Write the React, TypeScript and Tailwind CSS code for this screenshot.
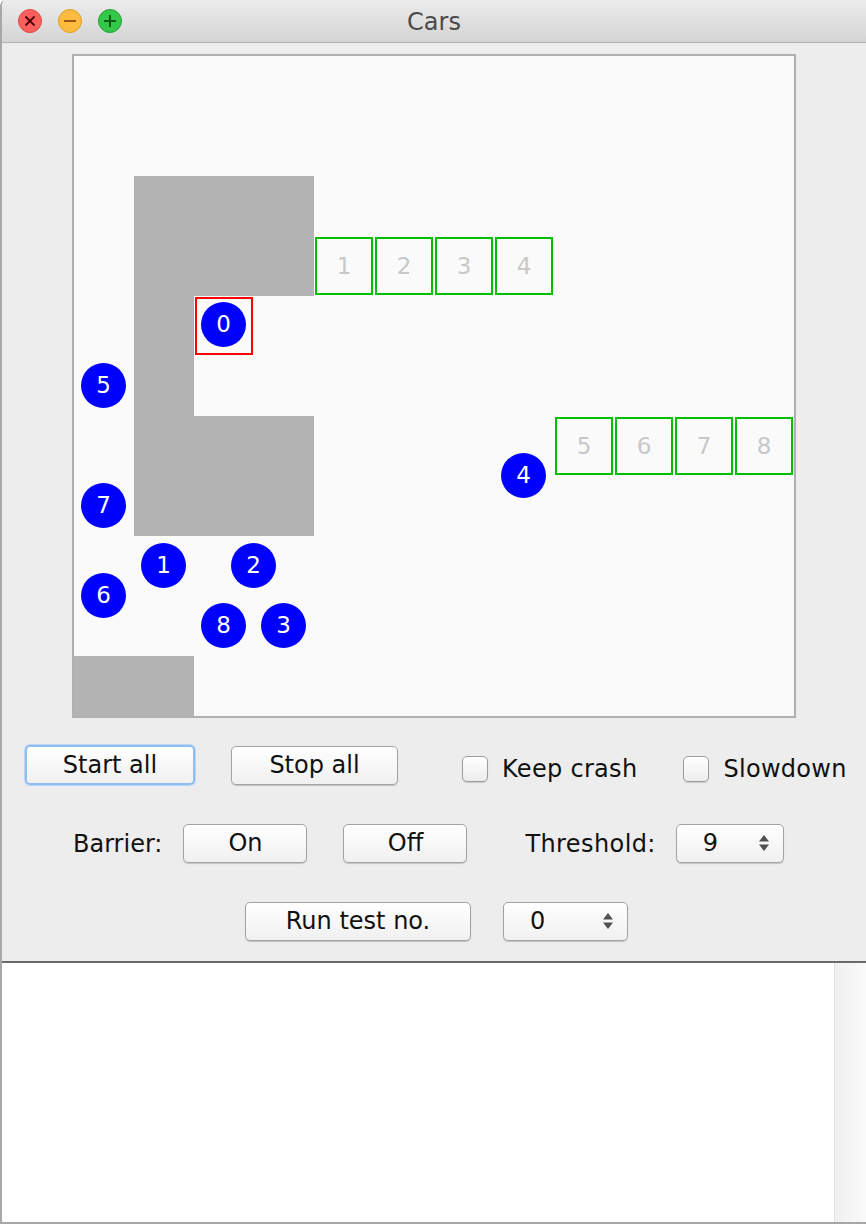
import React from "react";

const FONT = { fontFamily: '"DejaVu Sans", "Liberation Sans", sans-serif' };

const cars = [
  { n: 0, x: 149.5, y: 268.5 },
  { n: 5, x: 29.5, y: 329 },
  { n: 7, x: 29.5, y: 449 },
  { n: 1, x: 89.5, y: 509 },
  { n: 2, x: 179.5, y: 509 },
  { n: 6, x: 29.5, y: 539 },
  { n: 8, x: 149.5, y: 569 },
  { n: 3, x: 209.5, y: 569 },
  { n: 4, x: 449.5, y: 419 },
];

const slots = [
  { n: 1, c: 4, r: 3 },
  { n: 2, c: 5, r: 3 },
  { n: 3, c: 6, r: 3 },
  { n: 4, c: 7, r: 3 },
  { n: 5, c: 8, r: 6 },
  { n: 6, c: 9, r: 6 },
  { n: 7, c: 10, r: 6 },
  { n: 8, c: 11, r: 6 },
];

const blocks = [
  { x: 60, y: 120, w: 180, h: 120 },
  { x: 60, y: 240, w: 60, h: 120 },
  { x: 60, y: 360, w: 180, h: 120 },
  { x: 0, y: 600, w: 120, h: 60 },
];

function Btn({ label, w, focus }: { label: string; w: string; focus?: boolean }) {
  return (
    <div
      className={
        "h-[39px] flex items-center justify-center rounded-[5px] text-[24px] text-[#111] bg-gradient-to-b from-white to-[#f0f0f0] " +
        w +
        (focus
          ? " border-2 border-[#8fbef3] shadow-[0_0_0_1px_#b9d6f7]"
          : " border border-[#a3a3a3] shadow-[0_1px_1px_rgba(0,0,0,0.18)]")
      }
    >
      {label}
    </div>
  );
}

function Spinner({ value, w }: { value: string; w: string }) {
  return (
    <div
      className={
        "h-[39px] flex items-center rounded-[5px] border border-[#a3a3a3] bg-gradient-to-b from-white to-[#f0f0f0] shadow-[0_1px_1px_rgba(0,0,0,0.18)] text-[24px] text-[#111] " +
        w
      }
    >
      <span className="ml-[26px] flex-1">{value}</span>
      <svg width="12" height="18" viewBox="0 0 12 18" className="mr-[13px]">
        <polygon points="6,1 11,7.5 1,7.5" fill="#505050" />
        <polygon points="6,17 11,10.5 1,10.5" fill="#505050" />
      </svg>
    </div>
  );
}

function Check({ label }: { label: string }) {
  return (
    <div className="flex items-center">
      <div className="w-[26px] h-[26px] rounded-[5px] border border-[#9d9d9d] bg-gradient-to-b from-white to-[#ececec] shadow-[0_1px_1px_rgba(0,0,0,0.15)]" />
      <span className="ml-[14px] text-[24px] text-[#111] tracking-[0.3px]">{label}</span>
    </div>
  );
}

export default function App() {
  return (
    <div className="w-[866px] h-[1224px] bg-white overflow-hidden" style={FONT}>
      <div className="w-full h-full flex flex-col border-l-2 border-[#a8a8a8] rounded-tl-[6px] overflow-hidden">
        {/* Title bar */}
        <div className="relative h-[43px] shrink-0 bg-gradient-to-b from-[#ececec] to-[#d4d4d4] border-b border-[#b2b2b2] flex items-center">
          <div className="flex items-center gap-[16px] ml-[16px]">
            <div className="w-[24px] h-[24px] rounded-full bg-[#fc605c] border border-[#de4a45] flex items-center justify-center">
              <svg width="12" height="12" viewBox="0 0 12 12">
                <path d="M1.5 1.5 L10.5 10.5 M10.5 1.5 L1.5 10.5" stroke="#4d0000" strokeWidth="1.8" />
              </svg>
            </div>
            <div className="w-[24px] h-[24px] rounded-full bg-[#fdbc40] border border-[#de9f22] flex items-center justify-center">
              <svg width="14" height="14" viewBox="0 0 14 14">
                <path d="M1 7 L13 7" stroke="#985712" strokeWidth="2" />
              </svg>
            </div>
            <div className="w-[24px] h-[24px] rounded-full bg-[#34c84a] border border-[#25a232] flex items-center justify-center">
              <svg width="14" height="14" viewBox="0 0 14 14">
                <path d="M1 7 L13 7 M7 1 L7 13" stroke="#0b5d12" strokeWidth="2" />
              </svg>
            </div>
          </div>
          <div className="absolute left-0 right-0 top-0 h-[43px] flex items-center justify-center text-[24px] text-[#4a4a4a] pointer-events-none">
            Cars
          </div>
        </div>

        {/* Content */}
        <div className="h-[918px] shrink-0 bg-[#ededed] flex flex-col">
          <div className="mt-[11px] ml-[70px] w-[724px] h-[664px] border-2 border-[#b0b0b0] bg-[#fafafa]">
            <div className="relative w-[720px] h-[660px] overflow-hidden">
              {blocks.map((b, i) => (
                <div
                  key={i}
                  className="absolute bg-[#b3b3b3]"
                  style={{ left: b.x, top: b.y, width: b.w, height: b.h }}
                />
              ))}
              {slots.map((s) => (
                <div
                  key={s.n}
                  className="absolute w-[58px] h-[58px] border-2 border-[#00c000] flex items-center justify-center text-[23px] text-[#c8c8c8]"
                  style={{ left: s.c * 60 + 1, top: s.r * 60 + 1 }}
                >
                  {s.n}
                </div>
              ))}
              <div className="absolute left-[121px] top-[241px] w-[58px] h-[58px] border-2 border-[#ff0000]" />
              {cars.map((c) => (
                <div
                  key={c.n}
                  className="absolute w-[45px] h-[45px] rounded-full bg-[#0000ff] flex items-center justify-center text-[23px] text-white"
                  style={{ left: c.x - 22.5, top: c.y - 22.5 }}
                >
                  {c.n}
                </div>
              ))}
            </div>
          </div>

          {/* Row 1 */}
          <div className="mt-[27px] flex items-center h-[40px]">
            <div className="ml-[23px]">
              <Btn label="Start all" w="w-[170px] h-[40px]" focus />
            </div>
            <div className="ml-[36px]">
              <Btn label="Stop all" w="w-[167px]" />
            </div>
            <div className="ml-[64px] mt-[8px]">
              <Check label="Keep crash" />
            </div>
            <div className="ml-[46px] mt-[8px]">
              <Check label="Slowdown" />
            </div>
          </div>

          {/* Row 2 */}
          <div className="mt-[38px] flex items-center h-[40px]">
            <span className="ml-[71px] text-[24px] text-[#111] mt-[1px]">Barrier:</span>
            <div className="ml-[21px]">
              <Btn label="On" w="w-[124px]" />
            </div>
            <div className="ml-[36px]">
              <Btn label="Off" w="w-[124px]" />
            </div>
            <span className="ml-[58px] text-[24px] text-[#111] mt-[1px] tracking-[0.4px]">Threshold:</span>
            <div className="ml-[20px]">
              <Spinner value="9" w="w-[108px]" />
            </div>
          </div>

          {/* Row 3 */}
          <div className="mt-[38px] flex items-center h-[40px]">
            <div className="ml-[243px]">
              <Btn label="Run test no." w="w-[226px]" />
            </div>
            <div className="ml-[32px]">
              <Spinner value="0" w="w-[125px]" />
            </div>
          </div>
        </div>

        {/* Separator */}
        <div className="h-[2px] shrink-0 bg-[#6a6a6a]" />

        {/* Text area */}
        <div className="flex-1 flex border-b-2 border-[#a6a6a6] bg-white">
          <div className="flex-1 bg-white" />
          <div className="w-[32px] bg-gradient-to-r from-[#f0f0f0] to-[#fafafa] border-l border-[#e2e2e2]" />
        </div>
      </div>
    </div>
  );
}
